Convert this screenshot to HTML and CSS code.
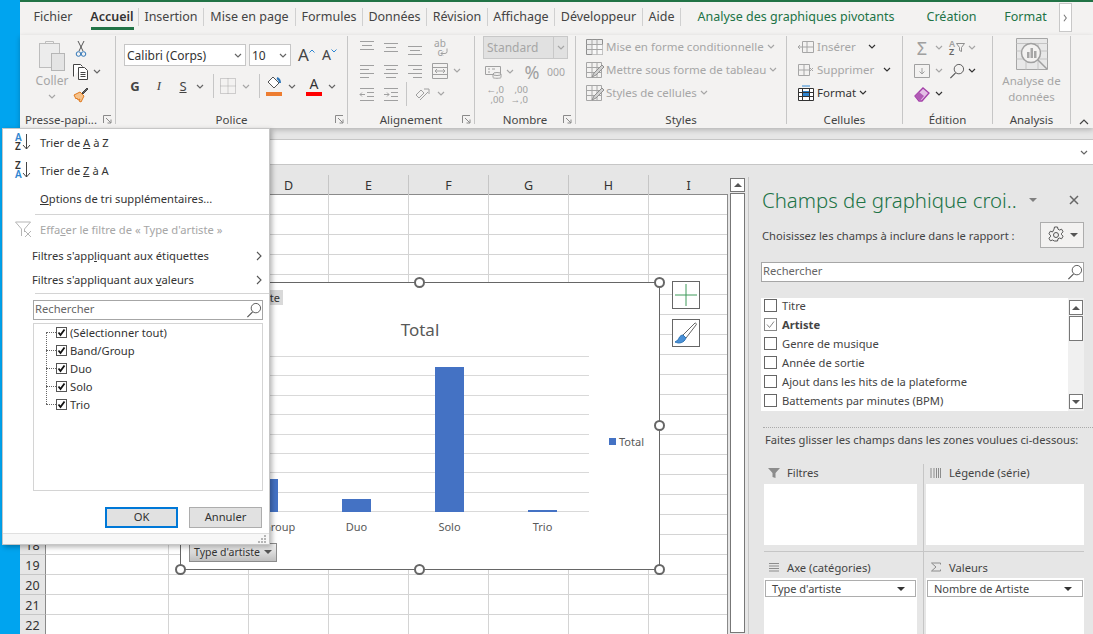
FILE: index.html
```html
<!DOCTYPE html>
<html lang="fr">
<head>
  <meta charset="UTF-8">
  <title>Excel - Champs de graphique croisé</title>
  <link rel="stylesheet" href="styles.css">
</head>
<body>
  <svg class="sprite" aria-hidden="true">
    <symbol id="chev" viewBox="0 0 8 5"><path d="M1 1l3 3 3-3" fill="none" stroke="currentColor" stroke-width="1.2"/></symbol>
    <symbol id="launch" viewBox="0 0 9 9"><path d="M.5 8V.5H8M3 3l5 5M8 4.500V8H4.500" fill="none" stroke="#8a8a8a"/></symbol>
    <symbol id="search" viewBox="0 0 17 17"><circle cx="10.500" cy="6.500" r="5" fill="none" stroke="#555"/><path d="M7 10.500L1.500 16" stroke="#555" stroke-width="1.300"/></symbol>
    <symbol id="check" viewBox="0 0 11 11"><path d="M2.500 5.500l2 2.500 4-5.500" fill="none" stroke="#111" stroke-width="1.800"/></symbol>
    <symbol id="tri" viewBox="0 0 8 4"><path d="M0 0h8L4 4z" fill="currentColor"/></symbol>
    <symbol id="right" viewBox="0 0 6 10"><path d="M1 1l4 4-4 4" fill="none" stroke="#555" stroke-width="1.100"/></symbol>
    <symbol id="cellgrid" viewBox="0 0 18 16"><path d="M.5.500h16v15H.5z" fill="#ececec" stroke="#8f8f8f"/><path d="M6 5.500h10.500v10H6z" fill="#f8f8f8"/><path d="M.5 5.500h16M.5 10.500h16M6 .500v15M11 .500v15" fill="none" stroke="#a6a6a6"/></symbol>
    <symbol id="cellbrush" viewBox="0 0 18 16"><path d="M.5.500h15v15H.5zM.5 5.500h15M.5 10.500h15M6 .500v15M11 .500v15" fill="#f3f2f1" stroke="#a6a6a6"/><path d="M6 15l2-4 8-8 2 2-8 8z" fill="#d0d0d0" stroke="#8f8f8f"/></symbol>
  </svg>

  <div class="app">
    <div class="desk"></div>
    <div class="window">
      <div class="title-strip"></div>

      <nav class="tabs">
        <span class="tab plain">Fichier</span>
        <span class="tab active">Accueil</span>
        <span class="tab">Insertion</span>
        <span class="tab">Mise en page</span>
        <span class="tab">Formules</span>
        <span class="tab">Données</span>
        <span class="tab">Révision</span>
        <span class="tab">Affichage</span>
        <span class="tab">Développeur</span>
        <span class="tab">Aide</span>
        <span class="tab plain green">Analyse des graphiques pivotants</span>
        <span class="tab plain green">Création</span>
        <span class="tab plain green">Format</span>
        <span class="tab-scroll"><svg class="tab-scroll-ic" viewBox="0 0 6 10"><path d="M1 1l3 4-3 4" fill="none" stroke="#777" stroke-width="1.300"/></svg></span>
      </nav>

      <div class="ribbon">
        <!-- Presse-papiers -->
        <section class="group g-clip">
          <div class="group-body clip-body">
            <div class="paste">
              <svg class="paste-ic" viewBox="0 0 28 32"><rect x="1.500" y="4.500" width="20" height="24" fill="#ececec" stroke="#bdbdbd"/><path d="M7.500 5V2.500h8V5" fill="none" stroke="#bdbdbd"/><rect x="13.500" y="14.500" width="13" height="17" fill="#e4e4e4" stroke="#b5b5b5"/></svg>
              <span class="paste-label">Coller</span>
              <svg class="chev off"><use href="#chev"/></svg>
            </div>
            <div class="rows clip-rows">
              <div class="row"><span class="cell w18"><svg class="ic-cut" viewBox="0 0 12 18"><path d="M3 1l5 10M9 1L4 11" stroke="#555" fill="none"/><circle cx="3.500" cy="14" r="2.300" fill="none" stroke="#2f76b8"/><circle cx="8.500" cy="14" r="2.300" fill="none" stroke="#2f76b8"/></svg></span></div>
              <div class="row"><span class="cell w18"><svg class="ic16" viewBox="0 0 16 16"><path d="M.5 12.500V.5h7l2 2M5.500 3.500h6l3 3v9h-9z" fill="#fff" stroke="#444"/><path d="M7.500 8.500h5M7.500 10.500h5M7.500 12.500h5" stroke="#444"/></svg></span><span class="cell w14"><svg class="chev"><use href="#chev"/></svg></span></div>
              <div class="row"><span class="cell w18"><svg class="ic16" viewBox="0 0 16 16"><path d="M1 8l6-3 4 4-3 6-2-1 1-2-2 1-1-2-1 1z" fill="#f6c28a" stroke="#e07a1f"/><path d="M9 6l5-5 1 1-5 5z" fill="#666" stroke="#444"/></svg></span></div>
            </div>
          </div>
          <div class="group-label">Presse-papi...<svg class="launch"><use href="#launch"/></svg></div>
        </section>

        <!-- Police -->
        <section class="group g-font">
          <div class="group-body font-body">
            <div class="font-top">
              <span class="select font-name">Calibri (Corps)<svg class="chev"><use href="#chev"/></svg></span>
              <span class="select font-size">10<svg class="chev"><use href="#chev"/></svg></span>
              <span class="grow big">A<svg class="caret" viewBox="0 0 6 4"><path d="M.5 3.500L3 1l2.500 2.500" fill="none" stroke="#2f86d1"/></svg></span>
              <span class="grow small">A<svg class="caret" viewBox="0 0 6 4"><path d="M.5.500L3 3 5.500.5" fill="none" stroke="#2f86d1"/></svg></span>
            </div>
            <div class="font-bottom">
              <span class="cell w24 fmt bold">G</span>
              <span class="cell w24 fmt ital">I</span>
              <span class="cell w24 fmt under">S</span>
              <span class="cell w10"><svg class="chev"><use href="#chev"/></svg></span>
              <span class="vsep sep-a"></span>
              <span class="cell w28"><svg class="ic16" viewBox="0 0 16 16"><path d="M.5.500h15v15H.5zM8 .500v15M.5 8h15" fill="none" stroke="#a6a6a6" stroke-dasharray="1 1"/></svg></span>
              <span class="cell w8"><svg class="chev off"><use href="#chev"/></svg></span>
              <span class="vsep sep-b"></span>
              <span class="cell w28 swatch"><svg class="ic16" viewBox="0 0 16 16"><path d="M7 1l6 6-5 5-6-6z" fill="#fff" stroke="#555"/><path d="M11 2c2 1 3 3 3 5" fill="none" stroke="#2f76b8" stroke-width="2"/></svg><i class="bar orange"></i></span>
              <span class="cell w8"><svg class="chev"><use href="#chev"/></svg></span>
              <span class="cell w28 swatch color-a">A<i class="bar red"></i></span>
              <span class="cell w8"><svg class="chev"><use href="#chev"/></svg></span>
            </div>
          </div>
          <div class="group-label">Police<svg class="launch"><use href="#launch"/></svg></div>
        </section>

        <!-- Alignement -->
        <section class="group g-align">
          <div class="group-body rows align-body">
            <div class="row">
              <span class="cell w24"><svg class="ic16" viewBox="0 0 16 16"><path d="M1 1.500h14M3 5.500h10M1 9.500h14" stroke="#a0a0a0"/></svg></span>
              <span class="cell w24"><svg class="ic16" viewBox="0 0 16 16"><path d="M1 3.500h14M3 7.500h10M1 11.500h14" stroke="#a0a0a0"/></svg></span>
              <span class="cell w24"><svg class="ic16" viewBox="0 0 16 16"><path d="M1 6.500h14M3 10.500h10M1 14.500h14" stroke="#a0a0a0"/></svg></span>
              <span class="cell w26 wrap-ic">ab<br>c<svg class="wrap-arrow" viewBox="0 0 8 8"><path d="M7 .5v3a2 2 0 0 1-2 2H1M3 3.500L1 5.500l2 2" fill="none" stroke="#a0a0a0"/></svg></span>
            </div>
            <div class="row">
              <span class="cell w24"><svg class="ic16" viewBox="0 0 16 16"><path d="M1 2.500h14M1 6.500h9M1 10.500h14M1 14.500h9" stroke="#a0a0a0"/></svg></span>
              <span class="cell w24"><svg class="ic16" viewBox="0 0 16 16"><path d="M1 2.500h14M3 6.500h10M1 10.500h14M3 14.500h10" stroke="#a0a0a0"/></svg></span>
              <span class="cell w24"><svg class="ic16" viewBox="0 0 16 16"><path d="M1 2.500h14M6 6.500h9M1 10.500h14M6 14.500h9" stroke="#a0a0a0"/></svg></span>
              <span class="cell w26"><svg class="ic16" viewBox="0 0 16 16"><path d="M.5.500h15v15H.5zM.5 4.500h15M.5 11.500h15" fill="#f3f2f1" stroke="#a0a0a0"/><path d="M3 8h10M5 6L3 8l2 2M11 6l2 2-2 2" fill="none" stroke="#a0a0a0"/></svg></span>
              <span class="cell w8"><svg class="chev off"><use href="#chev"/></svg></span>
            </div>
            <div class="row">
              <span class="cell w24"><svg class="ic16" viewBox="0 0 16 16"><path d="M1 2.500h14M8 6.500h7M8 10.500h7M1 14.500h14M6 8.500H1M3 6.500l-2 2 2 2" fill="none" stroke="#a0a0a0"/></svg></span>
              <span class="cell w24"><svg class="ic16" viewBox="0 0 16 16"><path d="M1 2.500h14M8 6.500h7M8 10.500h7M1 14.500h14M1 8.500h5M4 6.500l2 2-2 2" fill="none" stroke="#a0a0a0"/></svg></span>
              <span class="vsep sep-c"></span>
              <span class="cell w30"><svg class="ic16" viewBox="0 0 16 16"><path d="M2 9l5-5 3 3-5 5zM6 14L14 6M10 3h5v5" fill="none" stroke="#a0a0a0"/></svg></span>
              <span class="cell w8"><svg class="chev off"><use href="#chev"/></svg></span>
            </div>
          </div>
          <div class="group-label">Alignement<svg class="launch"><use href="#launch"/></svg></div>
        </section>

        <!-- Nombre -->
        <section class="group g-number">
          <div class="group-body rows number-body">
            <div class="row"><span class="select number-format">Standard<span class="number-drop"><svg class="chev off"><use href="#chev"/></svg></span></span></div>
            <div class="row">
              <span class="cell w20"><svg class="ic16 wide" viewBox="0 0 17 14"><path d="M.5 1.500h15v8H.5z" fill="none" stroke="#a0a0a0"/><ellipse cx="12" cy="9" rx="4" ry="1.500" fill="#f3f2f1" stroke="#a0a0a0"/><path d="M8 9v3.500c0 1 8 1 8 0V9M3 4h2M3 7h2M7 4h3" fill="none" stroke="#a0a0a0"/></svg></span>
              <span class="cell w14"><svg class="chev off"><use href="#chev"/></svg></span>
              <span class="cell w18 percent">%</span>
              <span class="cell w30 thousand">000</span>
            </div>
            <div class="row">
              <span class="cell w24 decimals"><i>←,0</i><i>,00</i></span>
              <span class="cell w24 decimals"><i>,00</i><i>→,0</i></span>
            </div>
          </div>
          <div class="group-label">Nombre<svg class="launch"><use href="#launch"/></svg></div>
        </section>

        <!-- Styles -->
        <section class="group g-styles">
          <div class="group-body rows styles-body">
            <div class="row off-text"><svg class="ic18"><use href="#cellgrid"/></svg><span>Mise en forme conditionnelle</span><svg class="chev off"><use href="#chev"/></svg></div>
            <div class="row off-text"><svg class="ic18"><use href="#cellbrush"/></svg><span>Mettre sous forme de tableau</span><svg class="chev off"><use href="#chev"/></svg></div>
            <div class="row off-text"><svg class="ic18"><use href="#cellbrush"/></svg><span>Styles de cellules</span><svg class="chev off"><use href="#chev"/></svg></div>
          </div>
          <div class="group-label">Styles</div>
        </section>

        <!-- Cellules -->
        <section class="group g-cells">
          <div class="group-body rows cells-body">
            <div class="row off-text"><svg class="ic16" viewBox="0 0 16 16"><path d="M4.500 2.500h11v11h-11zM4.500 8h11M9 2.500v11M4 8H0M2 6L0 8l2 2" fill="none" stroke="#a6a6a6"/></svg><span class="cell-name">Insérer</span><svg class="chev dark gap-a"><use href="#chev"/></svg></div>
            <div class="row off-text"><svg class="ic16" viewBox="0 0 16 16"><path d="M.5 2.500h11v11H.5zM.5 8h11M6 2.500v11M12 6l3 3M15 6l-3 3" fill="none" stroke="#a6a6a6"/></svg><span class="cell-name">Supprimer</span><svg class="chev dark gap-b"><use href="#chev"/></svg></div>
            <div class="row"><svg class="ic16" viewBox="0 0 16 16"><path d="M.5 3.500h15v12H.5z" fill="#fff" stroke="#333"/><path d="M4 6h8v5H4z" fill="#2f86d1"/><path d="M.5 7.500h15M.5 11.500h15M4.500 3.500v12M11.500 3.500v12" stroke="#333"/><path d="M4 1h8" stroke="#2f86d1"/></svg><span class="cell-name">Format</span><svg class="chev dark gap-c"><use href="#chev"/></svg></div>
          </div>
          <div class="group-label">Cellules</div>
        </section>

        <!-- Édition -->
        <section class="group g-edit">
          <div class="group-body rows edit-body">
            <div class="row">
              <span class="cell w20 sigma">Σ</span>
              <span class="cell w14"><svg class="chev off"><use href="#chev"/></svg></span>
              <span class="cell w22 sortfilter"><span class="az"><i class="az-top">A</i><i>Z</i></span><svg class="ic-funnel" viewBox="0 0 9 9"><path d="M.5.500h8L5.500 4.500v4l-2-1v-3z" fill="none" stroke="#8f8f8f"/></svg></span>
              <span class="cell w8"><svg class="chev off"><use href="#chev"/></svg></span>
            </div>
            <div class="row">
              <span class="cell w20"><svg class="ic16" viewBox="0 0 16 16"><path d="M.5 1.500h15v13H.5zM8 5v6M5.500 8.500L8 11l2.500-2.500" fill="none" stroke="#a0a0a0"/></svg></span>
              <span class="cell w14"><svg class="chev off"><use href="#chev"/></svg></span>
              <span class="cell w22"><svg class="ic16" viewBox="0 0 17 17"><use href="#search"/></svg></span>
              <span class="cell w8"><svg class="chev dark"><use href="#chev"/></svg></span>
            </div>
            <div class="row">
              <span class="cell w20"><svg class="ic16" viewBox="0 0 16 16"><path d="M1 10l8-8 6 5-7 8H5z" fill="#e4bfe6" stroke="#a33fa8" stroke-width="1.300"/><path d="M1 10l5 5 4-5-5-4z" fill="#b15bb5"/></svg></span>
              <span class="cell w14"><svg class="chev dark"><use href="#chev"/></svg></span>
            </div>
          </div>
          <div class="group-label">Édition</div>
        </section>

        <!-- Analysis -->
        <section class="group g-analysis">
          <div class="group-body analysis-body">
            <svg class="analysis-ic" viewBox="0 0 32 32"><path d="M.5.500h31v31H.5z" fill="#e8e8e8" stroke="#a6a6a6"/><path d="M.5 5.500h31M.5 13h31M.5 21h31M10 5.500v26M22 5.500v26" stroke="#c4c4c4"/><circle cx="15" cy="15" r="9.500" fill="#f3f2f1" stroke="#a0a0a0" stroke-width="1.500"/><path d="M11 14h2.500v6H11zM14.500 10H17v10h-2.500zM18 13h2.500v7H18z" fill="#a6a6a6"/><path d="M22 22l9 9" stroke="#a0a0a0" stroke-width="1.500"/></svg>
            <span class="analysis-text">Analyse de<br>données</span>
          </div>
          <div class="group-label">Analysis</div>
        </section>

        <svg class="ribbon-collapse" viewBox="0 0 10 6"><path d="M1 5l4-4 4 4" fill="none" stroke="#444" stroke-width="1.200"/></svg>
      </div>

      <div class="formula-bar">
        <svg class="chev formula-chev"><use href="#chev"/></svg>
      </div>

      <div class="work">
        <div class="sheet">
          <div class="sheet-head">
            <span></span><span class="col-name">B</span><span class="col-name">C</span><span class="col-name">D</span><span class="col-name">E</span><span class="col-name">F</span><span class="col-name">G</span><span class="col-name">H</span><span class="col-name">I</span>
          </div>
          <div class="sheet-body">
            <div class="row-heads">
              <span>1</span><span>2</span><span>3</span><span>4</span><span>5</span><span>6</span><span>7</span><span>8</span><span>9</span><span>10</span><span>11</span><span>12</span><span>13</span><span>14</span><span>15</span><span>16</span><span>17</span><span>18</span><span>19</span><span>20</span><span>21</span><span>22</span>
            </div>
            <div class="column"></div><div class="column"></div><div class="column"></div><div class="column"></div><div class="column"></div><div class="column"></div><div class="column"></div><div class="column"></div>
          </div>

          <div class="chart">
            <span class="value-chip">Nombre de Artiste</span>
            <div class="chart-title">Total</div>
            <div class="plot">
              <div class="gridlines"><i></i><i></i><i></i><i></i><i></i><i></i><i></i><i></i><i></i></div>
              <div class="bars">
                <span class="bar-slot"><i style="height:33px"></i></span>
                <span class="bar-slot"><i style="height:13px"></i></span>
                <span class="bar-slot"><i style="height:145px"></i></span>
                <span class="bar-slot"><i style="height:2px"></i></span>
              </div>
            </div>
            <div class="cats"><span>Band/Group</span><span>Duo</span><span>Solo</span><span>Trio</span></div>
            <div class="legend"><i></i>Total</div>
            <div class="axis-btn">Type d'artiste<svg class="tri"><use href="#tri"/></svg></div>
            <i class="handle h-tm"></i><i class="handle h-tr"></i><i class="handle h-mr"></i>
            <i class="handle h-bl"></i><i class="handle h-bm"></i><i class="handle h-br"></i>
          </div>
          <div class="chart-tools">
            <span class="tool"><svg class="tool-ic" viewBox="0 0 24 24"><path d="M12 1v22M1 12h22" stroke="#3f9a5a" fill="none"/></svg></span>
            <span class="tool"><svg class="tool-ic" viewBox="0 0 24 24"><path d="M9 14L21 2c1 0 2 1 1 2L12 17z" fill="#fff" stroke="#666"/><path d="M9 14c-3 0-4 3-5 5l-3 2c4 2 9 1 11-4z" fill="#4a90d6" stroke="#2f76b8"/></svg></span>
          </div>
        </div>

        <div class="vscroll">
          <span class="vscroll-up"><svg class="tri up"><use href="#tri"/></svg></span>
          <span class="vscroll-thumb"></span>
        </div>

        <aside class="pane">
          <div class="pane-title">
            <span class="pane-name">Champs de graphique croi..</span>
            <span class="cell w18 muted"><svg class="tri"><use href="#tri"/></svg></span>
            <svg class="pane-close" viewBox="0 0 10 10"><path d="M1 1l8 8M9 1l-8 8" stroke="#666" stroke-width="1.500"/></svg>
          </div>
          <div class="pane-desc">
            <span>Choisissez les champs à inclure dans le rapport :</span>
            <span class="gear-btn">
              <svg class="gear" viewBox="0 0 18 18"><path d="M7.500 1h3l.5 2.200 1.500.8 2.100-.8 1.500 2.600-1.600 1.500v1.400l1.600 1.500-1.500 2.600-2.100-.8-1.500.8-.5 2.200h-3L7 14.800l-1.500-.8-2.100.8-1.500-2.600 1.600-1.500V9.300L1.900 7.800l1.500-2.600 2.100.8L7 3.200z" fill="none" stroke="#555"/><circle cx="9" cy="9" r="2.500" fill="none" stroke="#555"/></svg>
              <svg class="tri"><use href="#tri"/></svg>
            </span>
          </div>
          <div class="searchbox pane-search"><span>Rechercher</span><svg class="ic16" viewBox="0 0 17 17"><use href="#search"/></svg></div>
          <div class="field-list">
            <ul class="fields">
              <li><i class="box"></i>Titre</li>
              <li class="used"><i class="box"><svg class="box-check" viewBox="0 0 11 11"><path d="M2 5.500l2.500 3 4.500-6" fill="none" stroke="#888"/></svg></i>Artiste</li>
              <li><i class="box"></i>Genre de musique</li>
              <li><i class="box"></i>Année de sortie</li>
              <li><i class="box"></i>Ajout dans les hits de la plateforme</li>
              <li><i class="box"></i>Battements par minutes (BPM)</li>
            </ul>
            <div class="list-scroll">
              <span class="list-btn"><svg class="tri up"><use href="#tri"/></svg></span>
              <span class="list-thumb"></span>
              <span class="list-btn end"><svg class="tri"><use href="#tri"/></svg></span>
            </div>
          </div>
          <div class="pane-sep"></div>
          <div class="pane-hint">Faites glisser les champs dans les zones voulues ci-dessous:</div>
          <div class="zones">
            <div class="zone">
              <div class="zone-head"><svg class="zone-ic" viewBox="0 0 12 12"><path d="M0 1h12L7.500 6v5l-3-1V6z" fill="#8c8c8c"/></svg>Filtres</div>
              <div class="zone-box"></div>
            </div>
            <div class="zone">
              <div class="zone-head"><svg class="zone-ic" viewBox="0 0 12 12"><path d="M1 1v10M4 1v10M6.500 1v10M8.500 1v10M10.500 1v10" stroke="#8c8c8c"/></svg>Légende (série)</div>
              <div class="zone-box"></div>
            </div>
            <div class="zone low">
              <div class="zone-head"><svg class="zone-ic" viewBox="0 0 12 12"><path d="M1 2.500h10M1 5h10M1 7.500h10M1 10h10" stroke="#8c8c8c"/></svg>Axe (catégories)</div>
              <div class="zone-box"><div class="zone-item">Type d'artiste<svg class="tri"><use href="#tri"/></svg></div></div>
            </div>
            <div class="zone low">
              <div class="zone-head"><svg class="zone-ic" viewBox="0 0 12 12"><path d="M1.500 2h9v1.500M1.500 2L6 6l-4.500 4h9V8.500" fill="none" stroke="#8c8c8c"/></svg>Valeurs</div>
              <div class="zone-box"><div class="zone-item">Nombre de Artiste<svg class="tri"><use href="#tri"/></svg></div></div>
            </div>
          </div>
        </aside>
      </div>
    </div>

    <!-- Menu du filtre, ouvert au-dessus de la feuille -->
    <div class="menu">
      <div class="menu-row"><span class="sort-ic"><span class="az sort-az"><i class="az-top">A</i><i>Z</i></span><svg class="sort-arrow" viewBox="0 0 9 16"><path d="M4.500 0v15M1 11l3.500 4L8 11" fill="none" stroke="#444"/></svg></span>Trier de&nbsp;<u>A</u>&nbsp;à Z</div>
      <div class="menu-row"><span class="sort-ic"><span class="az sort-az"><i>Z</i><i class="az-top">A</i></span><svg class="sort-arrow" viewBox="0 0 9 16"><path d="M4.500 0v15M1 11l3.500 4L8 11" fill="none" stroke="#444"/></svg></span>Trier de&nbsp;<u>Z</u>&nbsp;à A</div>
      <div class="menu-row text-only"><span><u>O</u>ptions de tri supplémentaires...</span></div>
      <div class="menu-sep"></div>
      <div class="menu-row clear-row"><svg class="clear-ic" viewBox="0 0 17 17"><path d="M.5 1h15L9.500 8v3M6.500 8L.5 1M6.500 8v7" fill="none" stroke="#b5b5b5"/><path d="M10 10l6 6M16 10l-6 6" stroke="#b5b5b5"/></svg><span>Effa<u>c</u>er le filtre de « Type d'artiste »</span></div>
      <div class="menu-row sub">Filtres s'app<u>l</u>iquant aux étiquettes<svg class="sub-arrow"><use href="#right"/></svg></div>
      <div class="menu-row sub">Filtres s'appliquant aux <u>v</u>aleurs<svg class="sub-arrow"><use href="#right"/></svg></div>
      <div class="menu-sep"></div>
      <div class="searchbox menu-search"><span>Rechercher</span><svg class="ic16" viewBox="0 0 17 17"><use href="#search"/></svg></div>
      <div class="tree-box">
        <ul class="tree">
          <li><i class="tick"><svg class="tick-ic"><use href="#check"/></svg></i>(Sélectionner tout)</li>
          <li><i class="tick"><svg class="tick-ic"><use href="#check"/></svg></i>Band/Group</li>
          <li><i class="tick"><svg class="tick-ic"><use href="#check"/></svg></i>Duo</li>
          <li><i class="tick"><svg class="tick-ic"><use href="#check"/></svg></i>Solo</li>
          <li><i class="tick"><svg class="tick-ic"><use href="#check"/></svg></i>Trio</li>
        </ul>
      </div>
      <div class="menu-buttons">
        <button class="btn primary">OK</button>
        <button class="btn">Annuler</button>
      </div>
      <div class="menu-grip"><svg class="grip" viewBox="0 0 8 8"><path d="M6 0h2v2H6zM3 3h2v2H3zM6 3h2v2H6zM0 6h2v2H0zM3 6h2v2H3zM6 6h2v2H6z" fill="#b5b5b5"/></svg></div>
    </div>
  </div>
</body>
</html>
```

FILE: styles.css
```css
* {
  box-sizing: border-box;
}
html, body {
  margin: 0;
  height: 100%;
  overflow: hidden;
}
body {
  font-family: "Noto Sans", "Open Sans", sans-serif;
  font-size: 11.5px;
  color: #333;
}
i {
  font-style: normal;
}
ul {
  list-style: none;
  margin: 0;
  padding: 0;
}
.sprite {
  display: none;
}

.app {
  position: relative;
  display: flex;
  width: 1093px;
  height: 634px;
  overflow: hidden;
  background: #00a4ef;
}
.desk {
  width: 20px;
  flex: none;
}
.window {
  flex: 1;
  min-width: 0;
  display: flex;
  flex-direction: column;
  background: #e6e6e6;
}
.title-strip {
  height: 2px;
  background: #217346;
}

/* Onglets */
.tabs {
  height: 33px;
  display: grid;
  grid-template-columns: 66px 53px 65px 92px 67px 64px 61px 67px 88px 38px 230px 81px 67px 14px;
  align-items: start;
  background: #f3f2f1;
  font-size: 12.5px;
  color: #444;
}
.tab {
  position: relative;
  height: 18px;
  margin-top: 6px;
  line-height: 18px;
  text-align: center;
  border-right: 1px solid #d0d0d0;
}
.tab.plain {
  border-right: none;
}
.tab.green {
  color: #217346;
}
.tab.active {
  font-weight: 600;
  color: #333;
}
.tab.active::after {
  content: "";
  position: absolute;
  left: 5px;
  right: 4px;
  top: 19px;
  height: 3px;
  background: #217346;
}
.tab-scroll {
  width: 13px;
  height: 29px;
  margin-top: 1px;
  background: #fff;
  border: 1px solid #c8c8c8;
  display: flex;
  align-items: center;
  justify-content: center;
}
.tab-scroll-ic {
  width: 5px;
  height: 8px;
}

/* Ruban */
.ribbon {
  position: relative;
  z-index: 2;
  height: 93px;
  display: flex;
  align-items: flex-start;
  background: #f3f2f1;
  box-shadow: 0 2px 5px rgba(0, 0, 0, 0.22);
}
.group {
  height: 88px;
  margin-top: 1px;
  display: flex;
  flex-direction: column;
  border-right: 1px solid #c6c6c6;
}
.g-clip { width: 96px; }
.g-font { width: 232px; }
.g-align { width: 127px; }
.g-number { width: 101px; }
.g-styles { width: 211px; }
.g-cells { width: 116px; }
.g-edit { width: 90px; }
.g-analysis { width: 78px; }
.group-body {
  height: 73px;
  flex: none;
}
.group-label {
  position: relative;
  height: 20px;
  flex: none;
  line-height: 22px;
  text-align: center;
  font-size: 11.5px;
  color: #444;
}
.launch {
  position: absolute;
  right: 3px;
  top: 6px;
  width: 9px;
  height: 9px;
}
.g-clip .group-label {
  text-align: left;
  padding-left: 5px;
}
.rows {
  display: grid;
  grid-auto-rows: 23px;
}
.row {
  display: flex;
  align-items: center;
}
.cell {
  display: flex;
  align-items: center;
  justify-content: center;
  flex: none;
}
.w8 { width: 8px; }
.w10 { width: 10px; }
.w14 { width: 14px; }
.w18 { width: 18px; }
.w20 { width: 20px; }
.w22 { width: 22px; }
.w24 { width: 24px; }
.w26 { width: 26px; }
.w28 { width: 28px; }
.w30 { width: 30px; }
.chev {
  width: 8px;
  height: 5px;
  flex: none;
  color: #666;
}
.chev.off {
  color: #a6a6a6;
}
.chev.dark {
  color: #333;
}
.ic16 {
  width: 16px;
  height: 16px;
  flex: none;
}
.ic18 {
  width: 18px;
  height: 16px;
  flex: none;
}
.vsep {
  width: 1px;
  height: 24px;
  flex: none;
  background: #c6c6c6;
}

/* Presse-papiers */
.clip-body {
  display: flex;
  padding-left: 9px;
}
.paste {
  width: 46px;
  display: flex;
  flex-direction: column;
  align-items: center;
  padding-top: 3px;
}
.paste-ic {
  width: 28px;
  height: 32px;
}
.paste-label {
  line-height: 16px;
  margin-top: 2px;
  font-size: 12px;
  color: #a6a6a6;
}
.paste .chev {
  margin-top: 5px;
}
.clip-rows {
  margin-left: -3px;
  padding-top: 1px;
}
.ic-cut {
  width: 12px;
  height: 18px;
}

/* Police */
.font-body {
  padding: 8px 0 0 8px;
}
.font-top {
  display: flex;
  align-items: center;
  height: 22px;
}
.select {
  display: flex;
  align-items: center;
  justify-content: space-between;
  height: 22px;
  padding: 0 3px 0 2px;
  background: #fff;
  border: 1px solid #c6c6c6;
  font-size: 12px;
  color: #333;
}
.font-name {
  width: 122px;
}
.font-size {
  width: 42px;
  margin-left: 3px;
}
.grow {
  display: flex;
  font-size: 17px;
  color: #444;
  line-height: 22px;
}
.grow.big {
  margin-left: 7px;
}
.grow.small {
  margin-left: 7px;
  font-size: 14px;
}
.caret {
  width: 6px;
  height: 4px;
  margin-top: 5px;
}
.font-bottom {
  display: flex;
  align-items: center;
  height: 22px;
  margin: 9px 0 0 -1px;
}
.fmt {
  font-size: 13px;
  color: #444;
}
.bold {
  font-weight: 700;
}
.ital {
  font-style: italic;
  font-family: "Liberation Serif", serif;
}
.under {
  text-decoration: underline;
}
.sep-a {
  margin-left: 8px;
}
.sep-b {
  margin-left: 9px;
}
.swatch {
  position: relative;
  height: 22px;
  padding-bottom: 5px;
}
.color-a {
  margin-left: 4px;
  font-size: 14px;
  line-height: 15px;
}
.bar {
  position: absolute;
  left: 6px;
  bottom: 1px;
  width: 16px;
  height: 4px;
}
.bar.orange {
  background: #ed7d31;
}
.bar.red {
  background: #f00;
}

/* Alignement */
.align-body {
  padding-left: 7px;
}
.wrap-ic {
  position: relative;
  display: block;
  text-align: center;
  font-size: 10px;
  line-height: 9px;
  color: #a0a0a0;
}
.wrap-arrow {
  position: absolute;
  right: 5px;
  bottom: 1px;
  width: 8px;
  height: 8px;
}
.sep-c {
  margin-left: 3px;
}

/* Nombre */
.number-body {
  padding: 1px 0 0 8px;
}
.number-format {
  width: 85px;
  height: 23px;
  margin-top: -2px;
  padding: 0 0 0 3px;
  background: #e1e1e1;
  border-color: #c8c8c8;
  color: #a6a6a6;
}
.number-drop {
  width: 14px;
  height: 100%;
  display: flex;
  align-items: center;
  justify-content: center;
  border-left: 1px solid #c8c8c8;
}
.wide {
  width: 17px;
}
.percent {
  margin-left: 6px;
  font-size: 18px;
  color: #a0a0a0;
}
.thousand {
  font-size: 10.5px;
  color: #a6a6a6;
}
.decimals {
  display: flex;
  flex-direction: column;
  align-items: flex-end;
  font-size: 9.5px;
  line-height: 10px;
  color: #a0a0a0;
  padding-right: 3px;
}

/* Styles */
.styles-body {
  margin-top: -1px;
  padding-left: 10px;
}
.off-text {
  color: #a6a6a6;
}
.off-text .chev {
  margin-left: 3px;
}
.off-text span {
  margin-left: 2px;
}

/* Cellules */
.cells-body {
  margin-top: -1px;
  padding-left: 11px;
}
.g-styles .group-label,
.g-cells .group-label {
  margin-top: 1px;
}
.cells-body .cell-name {
  margin-left: 3px;
}
.cells-body .gap-a {
  margin-left: 12px;
}
.cells-body .gap-b {
  margin-left: 9px;
}
.cells-body .gap-c {
  margin-left: 3px;
}

/* Édition */
.edit-body {
  padding: 0 0 0 9px;
}
.sigma {
  font-size: 18px;
  color: #a0a0a0;
}
.sortfilter {
  gap: 1px;
}
.az {
  display: flex;
  flex-direction: column;
  font-size: 9px;
  line-height: 8px;
  font-weight: 600;
  color: #666;
}
.az-top {
  color: #a0a0a0;
}
.ic-funnel {
  width: 9px;
  height: 9px;
}

/* Analysis */
.analysis-body {
  display: flex;
  flex-direction: column;
  align-items: center;
  padding-top: 2px;
}
.analysis-ic {
  width: 32px;
  height: 32px;
}
.analysis-text {
  margin-top: 3px;
  line-height: 16px;
  text-align: center;
  color: #a6a6a6;
}
.ribbon-collapse {
  position: absolute;
  right: 4px;
  bottom: 3px;
  width: 10px;
  height: 6px;
}

/* Barre de formule */
.formula-bar {
  height: 26px;
  margin: 11px 0 0 200px;
  display: flex;
  align-items: center;
  justify-content: flex-end;
  padding-right: 5px;
  background: #fff;
  border: 1px solid #c6c6c6;
  border-right: none;
}

/* Feuille */
.work {
  flex: 1;
  min-height: 0;
  display: flex;
  align-items: flex-start;
  padding-top: 10px;
  overflow: hidden;
}
.sheet {
  position: relative;
  width: 708px;
  flex: none;
}
.sheet-head,
.sheet-body {
  display: grid;
  grid-template-columns: 26px 123px 80px 80px 80px 80px 80px 80px 79px;
}
.sheet-head {
  height: 20px;
  border-bottom: 1px solid #8a8a8a;
}
.col-name {
  line-height: 21px;
  text-align: center;
  font-size: 12.5px;
  color: #333;
  border-right: 1px solid #c6c6c6;
}
.col-name:last-child {
  border-right: none;
}
.row-heads span {
  display: block;
  height: 20px;
  line-height: 21px;
  text-align: center;
  font-size: 12.5px;
  border-bottom: 1px solid #c6c6c6;
  border-right: 1px solid #8a8a8a;
}
.column {
  background: repeating-linear-gradient(#fff 0 19px, #d4d4d4 19px 20px);
  border-right: 1px solid #d4d4d4;
}
.column:last-child {
  border-right: 1px solid #8a8a8a;
}

/* Graphique : posé librement sur la feuille */
.chart {
  position: absolute;
  left: 160px;
  top: 107px;
  width: 480px;
  height: 288px;
  background: #fff;
  border: 1px solid #666;
  color: #595959;
}
.value-chip {
  position: absolute;
  left: 2px;
  top: 7px;
  width: 100px;
  height: 15px;
  line-height: 15px;
  text-align: right;
  padding-right: 3px;
  font-size: 11px;
  white-space: nowrap;
  overflow: hidden;
  background: #d9d9d9;
  color: #333;
}
.chart-title {
  position: absolute;
  left: 0;
  right: 0;
  top: 34px;
  text-align: center;
  font-size: 17px;
  line-height: 26px;
}
.plot {
  position: absolute;
  left: 36px;
  top: 73px;
  width: 372px;
  height: 156px;
}
.gridlines {
  height: 100%;
  display: flex;
  flex-direction: column;
  justify-content: space-between;
}
.gridlines i {
  display: block;
  height: 1px;
  background: #d9d9d9;
}
.bars {
  position: absolute;
  inset: 0;
  display: grid;
  grid-template-columns: repeat(4, 1fr);
  align-items: end;
}
.bar-slot {
  display: flex;
  justify-content: center;
  height: 155px;
  align-items: flex-end;
}
.bar-slot i {
  display: block;
  width: 29px;
  background: #4472c4;
}
.cats {
  position: absolute;
  left: 36px;
  top: 236px;
  width: 372px;
  display: grid;
  grid-template-columns: repeat(4, 1fr);
  text-align: center;
  font-size: 11px;
}
.legend {
  position: absolute;
  left: 428px;
  top: 151px;
  display: flex;
  align-items: center;
  gap: 3px;
  font-size: 11px;
}
.legend i {
  width: 7px;
  height: 7px;
  background: #4472c4;
}
.axis-btn {
  position: absolute;
  left: 8px;
  top: 260px;
  width: 88px;
  height: 19px;
  display: flex;
  align-items: center;
  justify-content: space-between;
  padding: 0 4px 1px;
  font-size: 10.5px;
  color: #333;
  border: 1px solid #8c8c8c;
  background: linear-gradient(#f5f5f5, #bfbfbf);
}
.tri {
  width: 8px;
  height: 4px;
  flex: none;
  color: #555;
}
.tri.up {
  transform: rotate(180deg);
}
.handle {
  position: absolute;
  width: 11px;
  height: 11px;
  border: 2px solid #666;
  border-radius: 50%;
  background: #fff;
}
.h-tm { left: 233px; top: -6px; }
.h-tr { right: -6px; top: -6px; }
.h-mr { right: -6px; top: 137px; }
.h-bl { left: -6px; bottom: -6px; }
.h-bm { left: 233px; bottom: -6px; }
.h-br { right: -6px; bottom: -6px; }
.chart-tools {
  position: absolute;
  left: 652px;
  top: 106px;
  display: flex;
  flex-direction: column;
  gap: 10px;
}
.tool {
  width: 28px;
  height: 28px;
  display: flex;
  align-items: center;
  justify-content: center;
  background: #fff;
  border: 1px solid #666;
}
.tool-ic {
  width: 24px;
  height: 24px;
}

/* Ascenseur vertical */
.vscroll {
  width: 15px;
  margin: 3px 1px 0 2px;
  flex: none;
  display: flex;
  flex-direction: column;
}
.vscroll-up {
  height: 14px;
  display: flex;
  align-items: center;
  justify-content: center;
  background: #fff;
  border: 1px solid #777;
}
.vscroll-thumb {
  height: 440px;
  margin-top: 1px;
  background: #fff;
  border: 1px solid #777;
}

/* Volet des champs */
.pane {
  width: 345px;
  height: 460px;
  margin: 2px 0 0 2px;
  flex: none;
  border-left: 1px solid #c6c6c6;
  font-size: 11.2px;
  color: #444;
}
.pane-title {
  display: flex;
  align-items: center;
  height: 26px;
  margin-top: 10px;
  padding-left: 13px;
}
.pane-name {
  width: 262px;
  font-size: 20.4px;
  font-weight: 300;
  line-height: 26px;
  color: #217346;
  white-space: nowrap;
}
.muted .tri {
  color: #808080;
}
.pane-close {
  width: 10px;
  height: 10px;
  margin-left: 27px;
}
.pane-desc {
  display: flex;
  align-items: center;
  justify-content: space-between;
  height: 26px;
  margin-top: 9px;
  padding: 0 9px 0 13px;
}
.gear-btn {
  width: 44px;
  height: 26px;
  display: flex;
  align-items: center;
  justify-content: center;
  gap: 5px;
  background: #f3f2f1;
  border: 1px solid #adadad;
}
.gear {
  width: 18px;
  height: 18px;
}
.searchbox {
  display: flex;
  align-items: center;
  justify-content: space-between;
  height: 20px;
  padding-left: 1px;
  background: #fff;
  border: 1px solid #a6a6a6;
  color: #666;
}
.searchbox span {
  margin-top: -3px;
}
.pane-search {
  width: 323px;
  margin: 14px 0 0 12px;
}
.field-list {
  display: flex;
  justify-content: space-between;
  width: 323px;
  height: 113px;
  margin: 16px 0 0 12px;
  background: #fff;
}
.fields {
  margin-top: -2px;
}
.fields li {
  display: flex;
  align-items: center;
  height: 19px;
  padding-left: 3px;
  color: #444;
}
.fields li.used {
  font-weight: 700;
}
.box {
  width: 13px;
  height: 13px;
  margin-right: 5px;
  border: 1px solid #666;
  display: flex;
  background: #fff;
}
.used .box {
  border-color: #888;
}
.box-check {
  width: 11px;
  height: 11px;
}
.list-scroll {
  width: 16px;
  display: flex;
  flex-direction: column;
  padding: 2px 1px;
  background: #f0f0f0;
}
.list-btn {
  height: 15px;
  display: flex;
  align-items: center;
  justify-content: center;
  background: #fff;
  border: 1px solid #777;
}
.list-btn.end {
  margin-top: auto;
}
.list-thumb {
  height: 25px;
  margin-top: 1px;
  background: #fff;
  border: 1px solid #777;
}
.pane-sep {
  margin: 16px 0 0 14px;
  border-top: 1px dotted #aaa;
}
.pane-hint {
  height: 18px;
  margin: 3px 0 0 16px;
  line-height: 18px;
  white-space: nowrap;
}
.zones {
  display: grid;
  grid-template-columns: 160px 160px;
  grid-template-rows: 87px 1fr;
  margin: 15px 0 0 15px;
  height: 170px;
}
.zone {
  padding-right: 6px;
  border-right: 1px solid #c6c6c6;
}
.zone:nth-child(even) {
  padding: 0 0 0 2px;
  border-right: none;
}
.zone.low {
  border-top: 1px solid #c6c6c6;
}
.zone-head {
  display: flex;
  align-items: center;
  height: 20px;
  padding: 0 0 3px 4px;
  color: #444;
}
.zone.low .zone-head {
  height: 26px;
  padding: 4px 0 0 4px;
}
.zone-ic {
  width: 12px;
  height: 12px;
  margin-right: 7px;
}
.zone-box {
  height: 61px;
  background: #fff;
}
.zone.low .zone-box {
  padding: 2px 1px;
}
.zone-item {
  display: flex;
  align-items: center;
  justify-content: space-between;
  height: 17px;
  padding: 0 10px 0 6px;
  font-size: 11px;
  background: #fff;
  border: 1px solid #adadad;
}
.zone-item .tri {
  color: #333;
}

/* Menu de filtre */
.menu {
  position: absolute;
  z-index: 5;
  left: 2px;
  top: 128px;
  width: 268px;
  height: 417px;
  background: #fff;
  border: 1px solid #c6c6c6;
  box-shadow: 2px 2px 5px rgba(0, 0, 0, 0.3);
  color: #333;
  font-size: 11.2px;
}
.menu-row {
  display: flex;
  align-items: center;
  height: 28px;
  padding: 0 0 2px 12px;
  white-space: nowrap;
}
.sort-ic {
  display: flex;
  align-items: center;
  width: 25px;
  flex: none;
}
.sort-az {
  font-size: 10px;
  line-height: 9px;
  color: #333;
}
.sort-az .az-top {
  color: #2f86d1;
}
.sort-arrow {
  width: 9px;
  height: 16px;
}
.text-only {
  padding-left: 37px;
}
.menu-sep {
  height: 1px;
  margin: 1px 0 0 32px;
  background: #d4d4d4;
}
.clear-row {
  height: 29px;
  padding-bottom: 0;
  color: #a6a6a6;
}
.clear-ic {
  width: 17px;
  height: 17px;
  margin-right: 8px;
}
.sub {
  display: block;
  position: relative;
  height: 24px;
  line-height: 24px;
  padding: 0 0 0 29px;
}
.sub-arrow {
  position: absolute;
  right: 7px;
  top: 7px;
  width: 6px;
  height: 10px;
}
.menu-search {
  width: 230px;
  margin: 6px 0 0 30px;
}
.tree-box {
  width: 230px;
  height: 168px;
  margin: 3px 0 0 30px;
  border: 1px solid #d4d4d4;
}
.tree {
  position: relative;
  margin: -1px 0 0 12px;
}
.tree::before {
  content: "";
  position: absolute;
  left: 0;
  top: 9px;
  height: 72px;
  border-left: 1px dotted #666;
}
.tree li {
  display: flex;
  align-items: center;
  height: 18px;
}
.tree li::before {
  content: "";
  width: 10px;
  border-top: 1px dotted #666;
}
.tick {
  display: flex;
  width: 11px;
  height: 11px;
  margin-right: 3px;
  border: 1px solid #555;
}
.tick-ic {
  width: 11px;
  height: 11px;
  margin: -1px;
}
.menu-buttons {
  display: flex;
  gap: 11px;
  margin: 16px 0 0 102px;
}
.btn {
  width: 73px;
  height: 21px;
  padding: 0 0 2px;
  font: inherit;
  color: #333;
  background: #e1e1e1;
  border: 1px solid #adadad;
}
.btn.primary {
  border: 2px solid #0078d7;
}
.menu-grip {
  display: flex;
  justify-content: flex-end;
  align-items: flex-end;
  height: 11px;
  margin-top: 5px;
  padding: 0 3px 1px 0;
  background: #f7f7f7;
  border-top: 1px solid #e0e0e0;
}
.grip {
  width: 8px;
  height: 8px;
}
```
